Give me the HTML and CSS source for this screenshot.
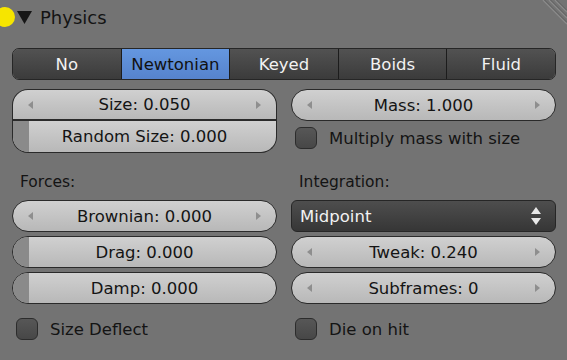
FILE: index.html
```html
<!DOCTYPE html>
<html lang="en">
<head>
    <meta charset="UTF-8">
    <title>Physics</title>
    <link rel="stylesheet" href="styles.css">
</head>
<body>

<div class="panel">
    <div class="header">
        <span class="dot"></span>
        <svg class="caret" width="15" height="13" viewBox="0 0 15 13"><path d="M0 0 H15 L7.5 13 Z" fill="#161616"/></svg>
        <span class="title">Physics</span>
        <svg class="grip" width="32" height="30" viewBox="0 0 32 30">
            <path d="M8 0 L32 24 M14 0 L32 18 M20 0 L32 12" stroke="#8a8a8a" stroke-width="1.5"/>
            <path d="M9.5 0 L32 22.5 M15.5 0 L32 16.5 M21.5 0 L32 10.5" stroke="#5e5e5e" stroke-width="1"/>
        </svg>
    </div>

    <div class="tabs">
        <div class="tab">No</div>
        <div class="tab active">Newtonian</div>
        <div class="tab">Keyed</div>
        <div class="tab">Boids</div>
        <div class="tab">Fluid</div>
    </div>

    <div class="row first">
        <div class="col">
            <div class="joined">
                <div class="field num top">Size: 0.050</div>
                <div class="field slider bottom">Random Size: 0.000</div>
            </div>
        </div>
        <div class="col">
            <div class="field num">Mass: 1.000</div>
            <label class="check"><span class="box"></span>Multiply mass with size</label>
        </div>
    </div>

    <div class="row labels">
        <div class="label">Forces:</div>
        <div class="label">Integration:</div>
    </div>

    <div class="row fields">
        <div class="col stack">
            <div class="field num">Brownian: 0.000</div>
            <div class="field slider">Drag: 0.000</div>
            <div class="field slider">Damp: 0.000</div>
        </div>
        <div class="col stack">
            <div class="menu">Midpoint
                <svg width="10" height="19" viewBox="0 0 10 19"><path d="M5 0 L10 7 H0 Z M0 11 H10 L5 18 Z" fill="#e8e8e8"/></svg>
            </div>
            <div class="field num">Tweak: 0.240</div>
            <div class="field num">Subframes: 0</div>
        </div>
    </div>

    <div class="row checks">
        <label class="check"><span class="box"></span>Size Deflect</label>
        <label class="check"><span class="box"></span>Die on hit</label>
    </div>
</div>

</body>
</html>
```

FILE: styles.css
```css
body {
    margin: 0;
    background-color: #737373;
    font-family: "DejaVu Sans", sans-serif;
    color: #141414;
    overflow: hidden;
}
.panel {
    width: 567px;
    height: 360px;
    padding: 0 11px 0 12px;
    box-sizing: border-box;
}
.header {
    height: 40px;
    display: flex;
    align-items: center;
    margin-left: -12px;
    margin-right: -11px;
}
.dot {
    width: 20px;
    height: 20px;
    border-radius: 50%;
    background-color: #f6e500;
    margin-left: -5px;
    margin-top: -6px;
}
.caret {
    margin-left: 2px;
    margin-top: -6px;
}
.title {
    font-size: 18px;
    margin-left: 8px;
    margin-top: -5px;
}
.grip {
    margin-left: auto;
    align-self: flex-start;
}
.tabs {
    display: flex;
    height: 32px;
    margin-top: 8px;
    border: 1px solid #262626;
    border-radius: 7px;
    overflow: hidden;
    box-sizing: border-box;
}
.tab {
    flex: 1;
    display: flex;
    align-items: center;
    justify-content: center;
    font-size: 16.5px;
    color: #f2f2f2;
    background: linear-gradient(#525252, #3b3b3b);
    border-left: 1px solid #1c1c1c;
}
.tab:first-child {
    border-left: none;
}
.tab.active {
    background: linear-gradient(#6497e0, #5683cc);
    color: #111;
}
.row {
    display: grid;
    grid-template-columns: 265px 1fr;
    column-gap: 14px;
}
.row.first {
    margin-top: 9px;
}
.col {
    display: flex;
    flex-direction: column;
}
.stack {
    gap: 4px;
}
.field {
    position: relative;
    height: 32px;
    box-sizing: border-box;
    border: 1px solid #2a2a2a;
    border-radius: 16px;
    background: linear-gradient(#d0d0d0, #b8b8b8);
    display: flex;
    align-items: center;
    justify-content: center;
    font-size: 16.5px;
    overflow: hidden;
}
.field.num::before,
.field.num::after {
    content: "";
    position: absolute;
    top: 50%;
    margin-top: -4px;
    border-top: 4px solid transparent;
    border-bottom: 4px solid transparent;
}
.field.num::before {
    left: 15px;
    border-right: 5px solid #8e8e8e;
}
.field.num::after {
    right: 15px;
    border-left: 5px solid #8e8e8e;
}
.field.slider::before {
    content: "";
    position: absolute;
    left: 0;
    top: 0;
    bottom: 0;
    width: 16px;
    background-color: #8a8a8a;
}
.joined .top {
    border-radius: 16px 16px 0 0;
    height: 32px;
    border-bottom: 2px solid #2a2a2a;
}
.joined .bottom {
    border-radius: 0 0 16px 16px;
    border-top: none;
    height: 32px;
}
.check {
    display: flex;
    align-items: center;
    font-size: 16.5px;
    height: 24px;
    margin-top: 5px;
    padding-left: 4px;
}
.box {
    width: 20px;
    height: 20px;
    border: 1px solid #2c2c2c;
    border-radius: 6px;
    background: linear-gradient(#575757, #474747);
    margin-right: 12px;
}
.labels {
    margin-top: 19px;
    height: 20px;
    margin-bottom: 8px;
}
.label {
    font-size: 15.5px;
    line-height: 20px;
    padding-left: 8px;
}
.menu {
    height: 32px;
    box-sizing: border-box;
    border: 1px solid #262626;
    border-radius: 6px;
    background: linear-gradient(#4e4e4e, #363636);
    color: #f2f2f2;
    font-size: 16.5px;
    display: flex;
    align-items: center;
    justify-content: space-between;
    padding: 0 14px 0 8px;
}
.checks {
    margin-top: 13px;
}
.checks .check {
    margin-top: 0;
}
```
